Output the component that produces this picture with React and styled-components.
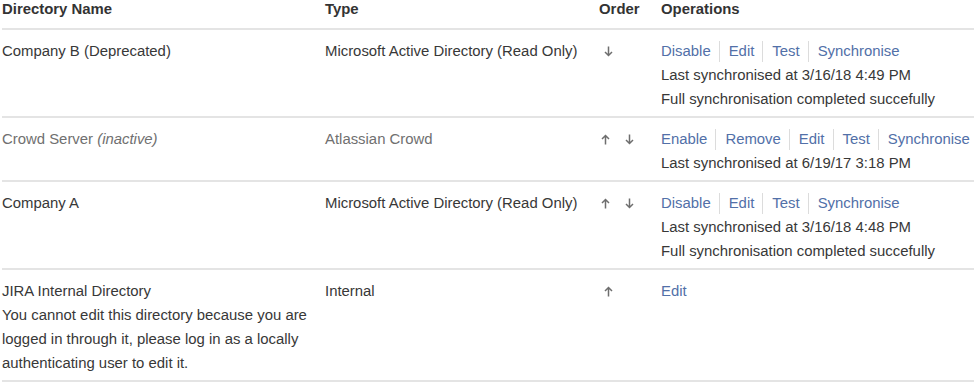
import React from "react";
import styled, { createGlobalStyle } from "styled-components";

const Global = createGlobalStyle`
  html, body { margin: 0; padding: 0; background: #ffffff; }
  body { font-family: "Liberation Sans", Arial, Helvetica, sans-serif; color: #333333; }
`;

const Table = styled.div`
  width: 974px;
  padding-left: 2px;
  box-sizing: border-box;
  font-size: 14.9px;
`;

const Row = styled.div`
  display: grid;
  grid-template-columns: 323px 274px 62px 1fr;
  border-bottom: 2px solid #e4e4e4;
  padding: ${(p) => (p.$head ? "0 0 9px" : "9px 0 5px")};
  line-height: ${(p) => (p.$head ? "19px" : "24px")};
  color: ${(p) => (p.$inactive ? "#707070" : "#383838")};
`;

const HeadCell = styled.div`
  font-weight: bold;
  color: #333333;
`;

const Cell = styled.div``;

const Note = styled.div`
  width: 310px;
`;

const Order = styled.div`
  display: flex;
  align-items: center;
  height: 24px;
  gap: 15px;
  padding-left: ${(p) => (p.$single ? "5px" : "2px")};
  color: #6b6b6b;
`;

const ArrowIcon = styled.svg`
  width: 9px;
  height: 11px;
  display: block;
`;

function Arrow({ up }) {
  return (
    <ArrowIcon viewBox="0 0 9 11" style={{ transform: up ? "none" : "rotate(180deg)" }}>
      <path d="M4.5 10.5V1.5M1 5L4.5 1.5L8 5" fill="none" stroke="#6e6e6e" strokeWidth="1.5" />
    </ArrowIcon>
  );
}

const Links = styled.div`
  display: flex;
  align-items: center;
  height: 24px;
`;

const Link = styled.a`
  color: #5270a8;
  text-decoration: none;
  line-height: 21px;
  & + & {
    margin-left: 8px;
    padding-left: 9px;
    border-left: 1px solid #dcdcdc;
  }
`;

const Status = styled.div`
  color: #383838;
`;

const rows = [
  {
    name: "Company B (Deprecated)",
    type: "Microsoft Active Directory (Read Only)",
    order: [false],
    links: ["Disable", "Edit", "Test", "Synchronise"],
    status: ["Last synchronised at 3/16/18 4:49 PM", "Full synchronisation completed succefully"],
  },
  {
    name: "Crowd Server",
    inactive: true,
    type: "Atlassian Crowd",
    order: [true, false],
    links: ["Enable", "Remove", "Edit", "Test", "Synchronise"],
    status: ["Last synchronised at 6/19/17 3:18 PM"],
  },
  {
    name: "Company A",
    type: "Microsoft Active Directory (Read Only)",
    order: [true, false],
    links: ["Disable", "Edit", "Test", "Synchronise"],
    status: ["Last synchronised at 3/16/18 4:48 PM", "Full synchronisation completed succefully"],
  },
  {
    name: "JIRA Internal Directory",
    note: "You cannot edit this directory because you are logged in through it, please log in as a locally authenticating user to edit it.",
    type: "Internal",
    order: [true],
    links: ["Edit"],
    status: [],
  },
];

export default function App() {
  return (
    <>
      <Global />
      <Table>
        <Row $head>
          <HeadCell>Directory Name</HeadCell>
          <HeadCell>Type</HeadCell>
          <HeadCell>Order</HeadCell>
          <HeadCell>Operations</HeadCell>
        </Row>
        {rows.map((r) => (
          <Row key={r.name} $inactive={r.inactive}>
            <Cell>
              {r.name}
              {r.inactive && (
                <>
                  {" "}
                  <i>(inactive)</i>
                </>
              )}
              {r.note && <Note>{r.note}</Note>}
            </Cell>
            <Cell>{r.type}</Cell>
            <Order $single={r.order.length === 1}>
              {r.order.map((up, i) => (
                <Arrow key={i} up={up} />
              ))}
            </Order>
            <Cell>
              <Links>
                {r.links.map((l) => (
                  <Link key={l} href="#">
                    {l}
                  </Link>
                ))}
              </Links>
              {r.status.map((s) => (
                <Status key={s}>{s}</Status>
              ))}
            </Cell>
          </Row>
        ))}
      </Table>
    </>
  );
}
